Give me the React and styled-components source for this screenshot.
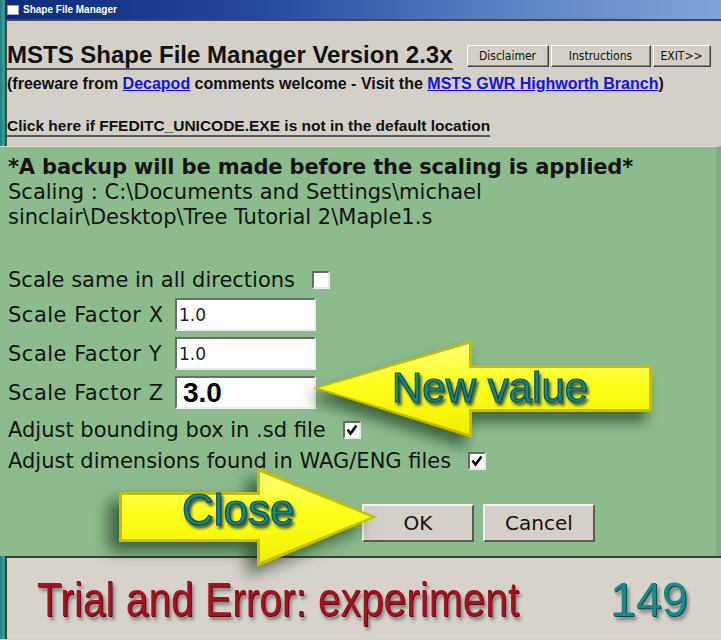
import React from 'react'
import styled, { createGlobalStyle } from 'styled-components'

const GlobalStyle = createGlobalStyle`
  html, body {
    margin: 0;
    padding: 0;
    background: #d4d0c8;
  }
  body {
    font-family: "Liberation Sans", Arial, sans-serif;
  }
`;

function Check({ checked }) {
  return (
    <CheckBox>
      {checked && (
        <svg width="14" height="14" viewBox="0 0 14 14">
          <path d="M2.5 6.5 L5.5 10.5 L11.5 2.5" fill="none" stroke="#000" strokeWidth="2.6" />
        </svg>
      )}
    </CheckBox>
  )
}

function ArrowLeft() {
  return (
    <NewValueArrow width="380" height="130" viewBox="0 0 380 130">
      <defs>
        <linearGradient id="yl1" x1="0" y1="0" x2="0" y2="1">
          <stop offset="0" stopColor="#ffff7a" />
          <stop offset="0.45" stopColor="#ffff1a" />
          <stop offset="1" stopColor="#f2ee00" />
        </linearGradient>
        <filter id="txt1" x="-10%" y="-20%" width="120%" height="150%">
          <feDropShadow dx="2" dy="3" stdDeviation="1.5" floodColor="#0a2e30" floodOpacity="0.8" />
        </filter>
      </defs>
      <polygon points="13,58 172,10 172,35 352,35 352,82 172,82 172,108" fill="#c6bd00" />
      <polygon points="19,58 169,14 169,38 349,38 349,79 169,79 169,104" fill="url(#yl1)" />
      <text x="92" y="72" fontFamily="Liberation Sans, Arial, sans-serif" fontSize="42"
        fill="#14878c" stroke="#0c4d52" strokeWidth="1.2" filter="url(#txt1)">New value</text>
    </NewValueArrow>
  )
}

function ArrowRight() {
  return (
    <CloseArrow width="300" height="130" viewBox="0 0 300 130">
      <defs>
        <linearGradient id="yl2" x1="0" y1="0" x2="0" y2="1">
          <stop offset="0" stopColor="#ffff7a" />
          <stop offset="0.45" stopColor="#ffff1a" />
          <stop offset="1" stopColor="#f2ee00" />
        </linearGradient>
        <filter id="txt2" x="-10%" y="-20%" width="120%" height="150%">
          <feDropShadow dx="2" dy="3" stdDeviation="1.5" floodColor="#0a2e30" floodOpacity="0.8" />
        </filter>
      </defs>
      <polygon points="19,37 157,37 157,12 277,62 157,112 157,87 19,87" fill="#c6bd00" />
      <polygon points="22,40 160,40 160,17 271,62 160,107 160,84 22,84" fill="url(#yl2)" />
      <text x="82" y="70" fontFamily="Liberation Sans, Arial, sans-serif" fontSize="44"
        fill="#14878c" stroke="#0c4d52" strokeWidth="1.2" filter="url(#txt2)">Close</text>
    </CloseArrow>
  )
}

export default function App() {
  return (
    <>
      <GlobalStyle />
      <Screen>
        <Frame $h={146}>
          <Stripe />
          <FrameBody>
            <TitleBar>
              <TitleIcon />
              Shape File Manager
            </TitleBar>
            <TopPanel>
              <HeadRow>
                <Heading>MSTS Shape File Manager Version 2.3x</Heading>
                <ButtonGroup>
                  <WinButton $w={82}>Disclaimer</WinButton>
                  <WinButton $w={100}>Instructions</WinButton>
                  <WinButton $w={58}>EXIT&gt;&gt;</WinButton>
                </ButtonGroup>
              </HeadRow>
              <Credits>
                (freeware from <Link>Decapod</Link> comments welcome - Visit the{' '}
                <Link>MSTS GWR Highworth Branch</Link>)
              </Credits>
              <Locate>Click here if FFEDITC_UNICODE.EXE is not in the default location</Locate>
            </TopPanel>
          </FrameBody>
        </Frame>

        <GreenPanel>
          <Notice>
            <strong>*A backup will be made before the scaling is applied*</strong>
            <br />
            Scaling : C:\Documents and Settings\michael
            <br />
            sinclair\Desktop\Tree Tutorial 2\Maple1.s
          </Notice>

          <CheckRow $mt={37}>
            Scale same in all directions <Check />
          </CheckRow>

          <FieldRow>
            <FieldLabel>Scale Factor X</FieldLabel>
            <Field>1.0</Field>
          </FieldRow>
          <FieldRow>
            <FieldLabel>Scale Factor Y</FieldLabel>
            <Field>1.0</Field>
          </FieldRow>
          <FieldRow>
            <FieldLabel>Scale Factor Z</FieldLabel>
            <Field $big>3.0</Field>
          </FieldRow>

          <CheckRow $mt={8}>
            Adjust bounding box in .sd file <Check checked />
          </CheckRow>
          <CheckRow $mt={6}>
            Adjust dimensions found in WAG/ENG files <Check checked />
          </CheckRow>

          <DialogButtons>
            <DialogButton>OK</DialogButton>
            <DialogButton>Cancel</DialogButton>
          </DialogButtons>
        </GreenPanel>

        <Frame $h={83}>
          <Stripe />
          <BottomPanel>
            <Caption>Trial and Error: experiment</Caption>
            <PageNo>149</PageNo>
          </BottomPanel>
        </Frame>

        <ArrowLeft />
        <ArrowRight />
      </Screen>
    </>
  )
}

const Screen = styled.div`
  position: relative;
  width: 721px;
  height: 640px;
  overflow: hidden;
  display: flex;
  flex-direction: column;
  background: #d4d0c8;
`;

const Frame = styled.div`
  display: flex;
  flex: none;
  height: ${p => p.$h}px;
`;

const Stripe = styled.div`
  flex: none;
  width: 5px;
  background: linear-gradient(to right, #1c7b78, #39a198 70%, #2b8780);
`;

const FrameBody = styled.div`
  flex: 1;
  display: flex;
  flex-direction: column;
`;

const TitleBar = styled.div`
  flex: none;
  height: 19px;
  display: flex;
  align-items: center;
  gap: 4px;
  padding-left: 2px;
  background: linear-gradient(to right, #0d2b7a 0%, #24489a 35%, #5b82c4 70%, #7ea5da 100%);
  color: #fff;
  font: bold 10px "Liberation Sans", Arial, sans-serif;
`;

const TitleIcon = styled.span`
  width: 12px;
  height: 10px;
  background: #fff;
  border: 1px solid #9aa4b8;
  box-sizing: border-box;
`;

const TopPanel = styled.div`
  flex: 1;
  background: #d4d0c8;
  border-top: 2px solid #4a4a4a;
  border-left: 2px solid #4a4a4a;
  padding-top: 21px;
  color: #111;
`;

const HeadRow = styled.div`
  display: flex;
  align-items: center;
`;

const Heading = styled.h1`
  margin: 0;
  font: bold 24px/26px "Liberation Sans", Arial, sans-serif;
  border-bottom: 2px solid #5a5a5a;
`;

const ButtonGroup = styled.div`
  display: flex;
  gap: 2px;
  margin-left: 14px;
`;

const WinButton = styled.button`
  width: ${p => p.$w}px;
  height: 22px;
  padding: 0;
  background: #d4d0c8;
  border: 1px solid;
  border-color: #ffffff #404040 #404040 #ffffff;
  box-shadow: inset -1px -1px #8a8680;
  font: 12px "DejaVu Sans Condensed", "DejaVu Sans", sans-serif;
  color: #111;
`;

const Credits = styled.div`
  margin-top: 4px;
  font: bold 16px/20px "Liberation Sans", Arial, sans-serif;
`;

const Link = styled.a`
  color: #1414e6;
  text-decoration: underline;
`;

const Locate = styled.div`
  display: inline-block;
  margin-top: 23px;
  font: bold 15.5px/18px "Liberation Sans", Arial, sans-serif;
  border-bottom: 2px solid #5a5a5a;
`;

const GreenPanel = styled.div`
  flex: none;
  height: 410px;
  box-sizing: border-box;
  padding: 8px 0 0 8px;
  background: #8cbc8e;
  border-top: 1px solid #e6e2da;
  border-right: 5px solid #7fae82;
  color: #141414;
  font: 21px "DejaVu Sans", Verdana, sans-serif;
`;

const Notice = styled.div`
  line-height: 25px;
  strong {
    letter-spacing: -0.15px;
  }
`;

const CheckRow = styled.div`
  display: flex;
  align-items: center;
  gap: 17px;
  height: 25px;
  margin-top: ${p => p.$mt}px;
`;

const CheckBox = styled.span`
  width: 18px;
  height: 18px;
  box-sizing: border-box;
  display: inline-flex;
  align-items: center;
  justify-content: center;
  background: #fff;
  border: 2px solid;
  border-color: #6a6a6a #e8e8e8 #e8e8e8 #6a6a6a;
`;

const FieldRow = styled.div`
  display: flex;
  align-items: center;
  height: 33px;
  margin-top: 6px;
`;

const FieldLabel = styled.span`
  width: 167px;
  white-space: nowrap;
  letter-spacing: 0.5px;
`;

const Field = styled.div`
  width: 141px;
  height: 33px;
  box-sizing: border-box;
  display: flex;
  align-items: center;
  padding-left: ${p => (p.$big ? 6 : 2)}px;
  background: #fff;
  border: 2px solid;
  border-color: #6c6c6c #eeeeee #eeeeee #6c6c6c;
  color: ${p => (p.$big ? '#000' : '#1a1a2a')};
  font: ${p => (p.$big ? 'bold 28px "Liberation Sans", Arial, sans-serif' : '17px "DejaVu Sans", Verdana, sans-serif')};
`;

const DialogButtons = styled.div`
  display: flex;
  gap: 9px;
  margin: 31px 0 0 354px;
`;

const DialogButton = styled.button`
  width: 112px;
  height: 38px;
  padding: 0;
  background: #d4d0c8;
  border: 2px solid;
  border-color: #f4f2ee #5a5a5a #5a5a5a #f4f2ee;
  font: 20px "DejaVu Sans", Tahoma, sans-serif;
  color: #111;
`;

const BottomPanel = styled.div`
  flex: 1;
  display: flex;
  align-items: center;
  justify-content: space-between;
  padding: 0 33px 0 30px;
  background: #d7d3cb;
  border-top: 2px solid #404040;
  border-left: 2px solid #404040;
`;

const Caption = styled.div`
  flex: none;
  width: 485px;
  white-space: nowrap;
  transform: scaleX(0.83);
  transform-origin: left center;
  font: 49px/56px "Liberation Sans", Arial, sans-serif;
  color: #a6111f;
  text-shadow: 1px 1px 0 #5a0a10, 3px 4px 4px rgba(0, 0, 0, 0.45);
`;

const PageNo = styled(Caption)`
  width: auto;
  transform-origin: right center;
  transform: scaleX(0.95);
  color: #178a8c;
  text-shadow: 1px 1px 0 #0a4a4c, 3px 4px 4px rgba(0, 0, 0, 0.45);
`;

const NewValueArrow = styled.svg`
  position: absolute;
  left: 300px;
  top: 330px;
  filter: drop-shadow(-6px 10px 7px rgba(0, 30, 0, 0.55));
`;

const CloseArrow = styled.svg`
  position: absolute;
  left: 100px;
  top: 455px;
  filter: drop-shadow(-10px 9px 8px rgba(0, 30, 0, 0.6));
`;
